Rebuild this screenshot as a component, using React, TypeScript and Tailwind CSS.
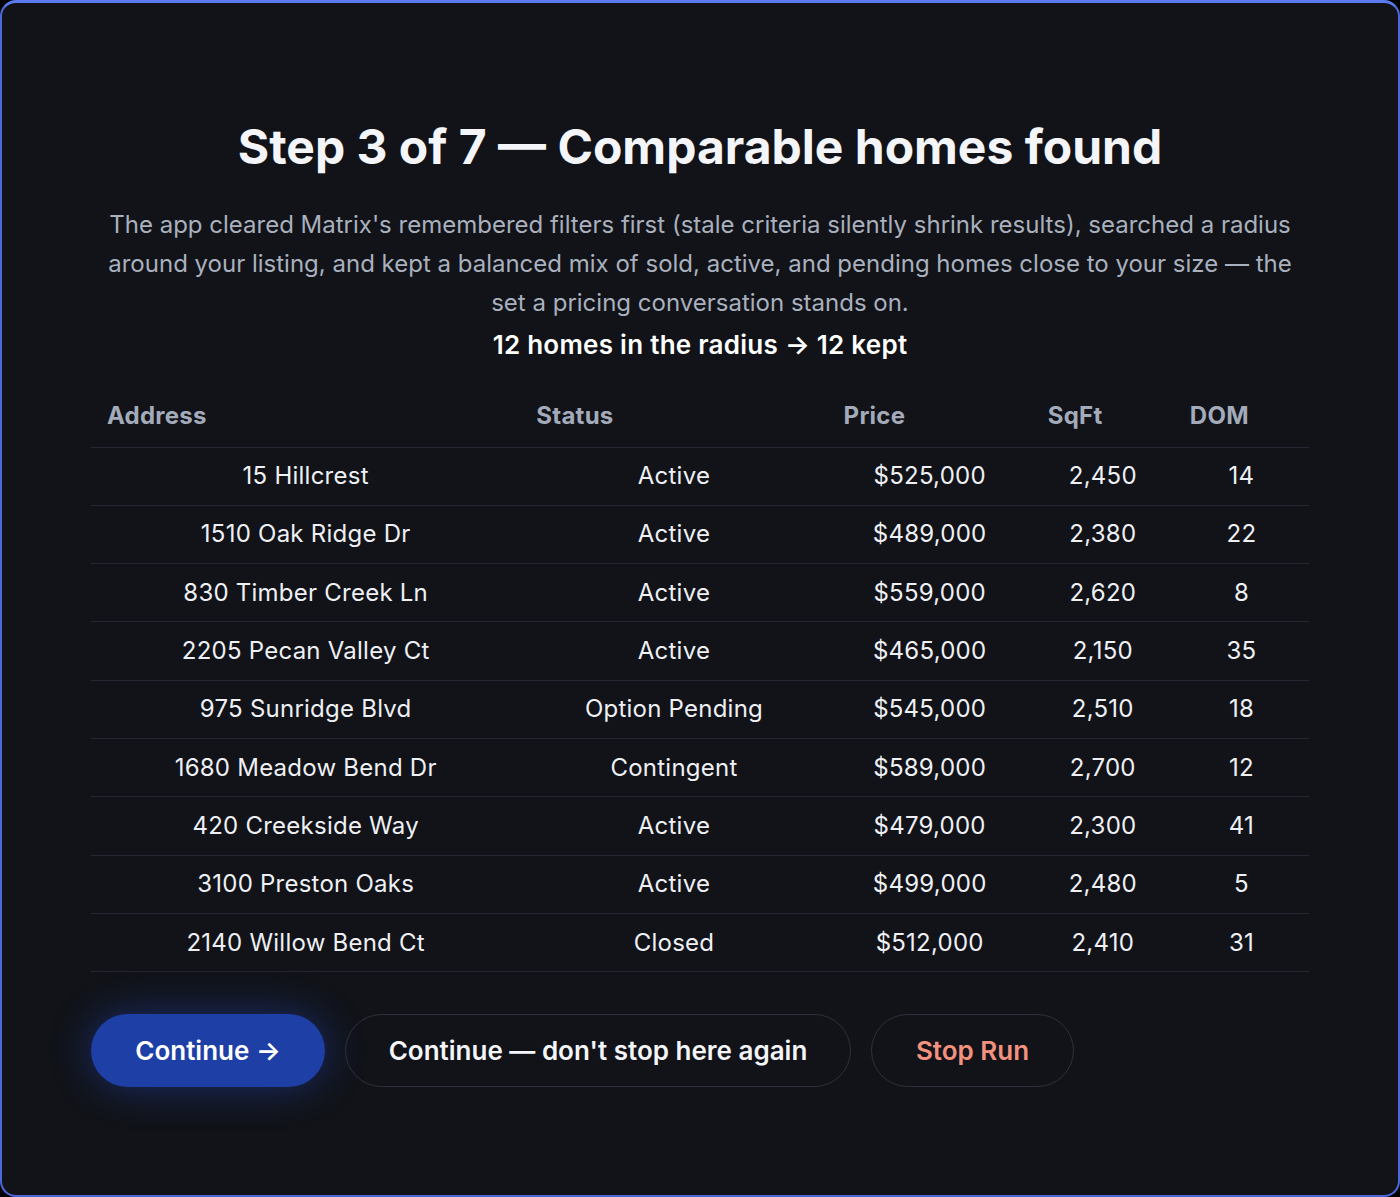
import React from "react";

type Comp = {
    address: string;
    status: string;
    price: string;
    sqft: string;
    dom: string;
};

const comps: Comp[] = [
    { address: "15 Hillcrest", status: "Active", price: "$525,000", sqft: "2,450", dom: "14" },
    { address: "1510 Oak Ridge Dr", status: "Active", price: "$489,000", sqft: "2,380", dom: "22" },
    { address: "830 Timber Creek Ln", status: "Active", price: "$559,000", sqft: "2,620", dom: "8" },
    { address: "2205 Pecan Valley Ct", status: "Active", price: "$465,000", sqft: "2,150", dom: "35" },
    { address: "975 Sunridge Blvd", status: "Option Pending", price: "$545,000", sqft: "2,510", dom: "18" },
    { address: "1680 Meadow Bend Dr", status: "Contingent", price: "$589,000", sqft: "2,700", dom: "12" },
    { address: "420 Creekside Way", status: "Active", price: "$479,000", sqft: "2,300", dom: "41" },
    { address: "3100 Preston Oaks", status: "Active", price: "$499,000", sqft: "2,480", dom: "5" },
    { address: "2140 Willow Bend Ct", status: "Closed", price: "$512,000", sqft: "2,410", dom: "31" },
];

const columns = [
    { label: "Address", width: "w-[429px]" },
    { label: "Status", width: "w-[307px]" },
    { label: "Price", width: "w-[204px]" },
    { label: "SqFt", width: "w-[142px]" },
    { label: "DOM", width: "w-[135px]" },
];

export default function App() {
    return (
        <div
            className="min-h-screen bg-black"
            style={{ fontFamily: "Inter, 'Noto Sans', sans-serif" }}
        >
            <div className="flex min-h-screen flex-col rounded-2xl border-2 border-t-[3px] border-[#4b69d6] border-t-[#5a7bf0] bg-[#111318] px-[89px] pt-[115px] pb-[100px]">
                <h1 className="text-center text-[48px] font-bold leading-[58px] text-[#f4f5f8]">
                    Step 3 of 7 — Comparable homes found
                </h1>

                <p className="mx-auto mt-[29px] max-w-[1188px] text-center text-[24px] leading-[39px] text-[#a9b0be]">
                    The app cleared Matrix's remembered filters first (stale
                    criteria silently shrink results), searched a radius
                    around your listing, and kept a balanced mix of sold,
                    active, and pending homes close to your size — the set a
                    pricing conversation stands on.
                </p>
                <p className="mt-[3px] text-center text-[26px] font-semibold leading-[39px] tracking-[0.01em] text-white">
                    12 homes in the radius → 12 kept
                </p>

                <table className="mt-[21px] w-full table-fixed border-collapse">
                    <thead>
                        <tr className="border-b border-[#232733]">
                            {columns.map((col) => (
                                <th
                                    key={col.label}
                                    className={`${col.width} h-[62px] px-4 text-left text-[24px] font-bold tracking-[0.01em] text-[#a3abba]`}
                                >
                                    {col.label}
                                </th>
                            ))}
                        </tr>
                    </thead>
                    <tbody>
                        {comps.map((comp) => (
                            <tr
                                key={comp.address}
                                className="border-b border-[#232733] text-center text-[24px] tracking-[0.01em] text-[#eef0f4]"
                            >
                                <td className="h-[58.3px] px-4">{comp.address}</td>
                                <td className="px-4">{comp.status}</td>
                                <td className="px-4">{comp.price}</td>
                                <td className="px-4">{comp.sqft}</td>
                                <td className="px-4">{comp.dom}</td>
                            </tr>
                        ))}
                    </tbody>
                </table>

                <div className="mt-[42px] flex items-center gap-5">
                    <button className="h-[73px] w-[234px] rounded-full bg-[#1d3fa6] text-[26px] font-semibold text-white shadow-[0_0_40px_rgba(37,78,210,0.45)]">
                        Continue →
                    </button>
                    <button className="h-[73px] w-[506px] rounded-full border border-[#2c313d] text-[26px] font-semibold text-[#f4f5f8]">
                        Continue — don't stop here again
                    </button>
                    <button className="h-[73px] w-[203px] rounded-full border border-[#2c313d] text-[26px] font-semibold text-[#f3917f]">
                        Stop Run
                    </button>
                </div>
            </div>
        </div>
    );
}
